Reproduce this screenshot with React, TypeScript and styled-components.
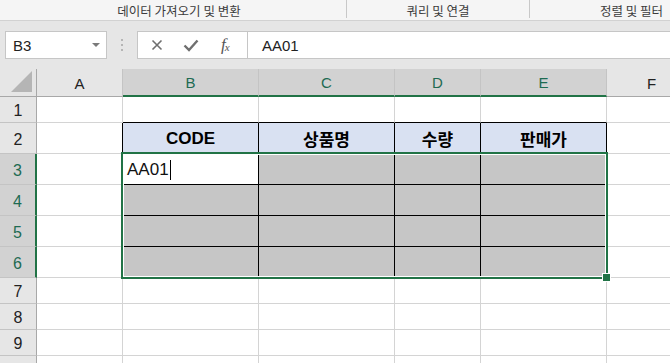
import styled, { createGlobalStyle } from 'styled-components';

const GlobalStyle = createGlobalStyle`
    html, body {
        margin: 0;
        padding: 0;
        width: 670px;
        height: 363px;
        overflow: hidden;
        background: #e6e6e6;
        font-family: "Liberation Sans", "Noto Sans CJK KR", sans-serif;
    }
`;

const Page = styled.div`
    width: 670px;
    height: 363px;
    overflow: hidden;
    display: flex;
    flex-direction: column;
`;

// 리본 그룹 이름 줄
const RibbonStrip = styled.div`
    height: 20px;
    flex: none;
    display: flex;
    background: #f5f5f5;
    border-bottom: 1px solid #d2d2d2;
`;

const RibbonGroup = styled.div<{ $width?: number; $pad?: number; $last?: boolean }>`
    ${(p) => (p.$width ? `width: ${p.$width}px;` : 'flex: 1;')}
    flex-shrink: 0;
    box-sizing: border-box;
    display: flex;
    align-items: center;
    justify-content: ${(p) => (p.$last ? 'flex-start' : 'center')};
    padding-left: ${(p) => p.$pad || 0}px;
    padding-top: 2px;
    font-family: "Noto Sans CJK KR", sans-serif;
    font-size: 12.5px;
    color: #3c3c3c;
    white-space: nowrap;
    border-right: ${(p) => (p.$last ? 'none' : '1px solid #c8c8c8')};
    margin-bottom: 2px;
`;

// 수식 입력줄
const FormulaBar = styled.div`
    height: 28px;
    flex: none;
    display: flex;
    align-items: stretch;
    padding: 10px 0 10px 5px;
`;

const NameBox = styled.div`
    width: 102px;
    box-sizing: border-box;
    background: #fff;
    border: 1px solid #c6c6c6;
    display: flex;
    align-items: center;
    justify-content: space-between;
    padding: 0 6px 0 7px;
    font-size: 15px;
    color: #222;
`;

const DropArrow = styled.span`
    width: 0;
    height: 0;
    border-left: 4px solid transparent;
    border-right: 4px solid transparent;
    border-top: 4px solid #7a7a7a;
`;

const Grip = styled.div`
    width: 30px;
    display: flex;
    flex-direction: column;
    align-items: center;
    justify-content: center;
    gap: 3px;
`;

const GripDot = styled.span`
    width: 2px;
    height: 2px;
    background: #b5b5b5;
`;

const ButtonBox = styled.div`
    width: 111px;
    box-sizing: border-box;
    background: #fff;
    border: 1px solid #c6c6c6;
    display: flex;
    align-items: center;
    padding-left: 13px;
    gap: 14px;
`;

const FxLabel = styled.span`
    font-family: "Liberation Serif", serif;
    font-style: italic;
    font-size: 17px;
    color: #555;
    margin-left: 8px;
    letter-spacing: -1px;
    sub {
        font-size: 11px;
        vertical-align: -1px;
    }
`;

const FormulaInput = styled.div`
    flex: 1;
    background: #fff;
    border: 1px solid #c6c6c6;
    border-right: none;
    margin-left: -1px;
    display: flex;
    align-items: center;
    padding-left: 14px;
    font-size: 15px;
    color: #222;
`;

// 시트
const SheetWrap = styled.div`
    position: relative;
    flex: 1;
    background: #fff;
`;

const colWidths = [37, 86, 136, 136, 86, 126, 90];
const rowHeights = [28, 26, 31, 31, 31, 31, 31, 26, 26, 26, 26];

const Grid = styled.div`
    display: grid;
    grid-template-columns: ${colWidths.map((w) => `${w}px`).join(' ')};
    grid-template-rows: ${rowHeights.map((h) => `${h}px`).join(' ')};
`;

type CellKind = 'corner' | 'colhead' | 'rowhead' | 'cell' | 'thead' | 'tbody' | 'active';

const Cell = styled.div<{ $kind: CellKind; $selected?: boolean; $right?: string; $bottom?: string }>`
    box-sizing: border-box;
    display: flex;
    align-items: center;
    justify-content: ${(p) => (p.$kind === 'active' ? 'flex-start' : 'center')};
    overflow: hidden;
    position: relative;
    border-right: 1px solid ${(p) => p.$right || '#d4d4d4'};
    border-bottom: 1px solid ${(p) => p.$bottom || '#d4d4d4'};
    background: ${(p) =>
        p.$kind === 'thead'
            ? '#d9e1f2'
            : p.$kind === 'tbody'
            ? '#c6c6c6'
            : p.$kind === 'colhead' || p.$kind === 'rowhead' || p.$kind === 'corner'
            ? p.$selected
                ? '#d2d2d2'
                : '#e6e6e6'
            : '#fff'};
    ${(p) =>
        p.$kind === 'colhead' &&
        `
        font-size: 15px;
        padding-top: 1px;
        color: ${p.$selected ? '#1e6b52' : '#222'};
        border-right-color: #c4c4c4;
        border-bottom: ${p.$selected ? '2px solid #217346' : '1px solid #a8a8a8'};
    `}
    ${(p) =>
        p.$kind === 'rowhead' &&
        `
        font-size: 16px;
        padding-top: 3px;
        color: ${p.$selected ? '#1e6b52' : '#222'};
        border-bottom-color: #c4c4c4;
        border-right: ${p.$selected ? '2px solid #217346' : '1px solid #a8a8a8'};
    `}
    ${(p) =>
        p.$kind === 'corner' &&
        `
        border-right-color: #a8a8a8;
        border-bottom-color: #a8a8a8;
    `}
    ${(p) =>
        p.$kind === 'thead' &&
        `
        font-family: "Liberation Sans", "Noto Sans CJK KR", sans-serif;
        font-weight: 700;
        font-size: 17px;
        color: #000;
        padding-top: 1px;
    `}
    ${(p) =>
        p.$kind === 'active' &&
        `
        font-size: 17px;
        color: #111;
        padding-left: 4px;
        padding-top: 2px;
    `}
`;

const Caret = styled.span`
    display: inline-block;
    width: 1px;
    height: 20px;
    background: #000;
    margin-left: 1px;
`;

const Selection = styled.div`
    position: absolute;
    box-sizing: border-box;
    border: 2px solid #217346;
    box-shadow: inset 0 0 0 1px #fff;
    pointer-events: none;
`;

const FillHandle = styled.div`
    position: absolute;
    right: -5px;
    bottom: -5px;
    width: 7px;
    height: 7px;
    background: #217346;
    border: 1px solid #fff;
`;

const columns = ['A', 'B', 'C', 'D', 'E', 'F'];
const headers = ['CODE', '상품명', '수량', '판매가'];
// 화면 아래에 잘려 보이는 10행은 숫자가 보이지 않는다
const lastVisibleRow = 9;

const sum = (arr: number[], n: number) => arr.slice(0, n).reduce((a, b) => a + b, 0);

const CornerTriangle = () => (
    <svg width="22" height="22" viewBox="0 0 22 22" style={{ position: 'absolute', right: 3, bottom: 3 }}>
        <polygon points="21,0 21,21 0,21" fill="#b5b5b5" />
    </svg>
);

const App: React.FC = () => {
    const cells: React.ReactNode[] = [];

    // 열 머리글
    cells.push(
        <Cell key="corner" $kind="corner">
            <CornerTriangle />
        </Cell>
    );
    columns.forEach((c, i) =>
        cells.push(
            <Cell key={`h-${c}`} $kind="colhead" $selected={i >= 1 && i <= 4}>
                {c}
            </Cell>
        )
    );

    for (let r = 1; r <= 10; r++) {
        cells.push(
            <Cell key={`r-${r}`} $kind="rowhead" $selected={r >= 3 && r <= 6}>
                {r <= lastVisibleRow ? r : null}
            </Cell>
        );
        columns.forEach((c, i) => {
            const inTable = r >= 2 && r <= 6 && i >= 1 && i <= 4;
            // 표 왼쪽/위쪽 선은 이웃 셀이 그린다
            const leftOfTable = i === 0 && r >= 2 && r <= 6;
            const aboveTable = r === 1 && i >= 1 && i <= 4;
            let kind: CellKind = 'cell';
            let content: React.ReactNode = null;
            if (inTable) {
                if (r === 2) {
                    kind = 'thead';
                    content = headers[i - 1];
                } else if (r === 3 && i === 1) {
                    kind = 'active';
                    content = (
                        <>
                            AA01
                            <Caret />
                        </>
                    );
                } else {
                    kind = 'tbody';
                }
            }
            cells.push(
                <Cell
                    key={`${c}${r}`}
                    $kind={kind}
                    $right={inTable || leftOfTable ? '#000' : undefined}
                    $bottom={inTable || aboveTable ? '#000' : undefined}
                >
                    {content}
                </Cell>
            );
        });
    }

    const selLeft = sum(colWidths, 2) - 2;
    const selTop = sum(rowHeights, 3) - 2;
    const selWidth = colWidths[2] + colWidths[3] + colWidths[4] + colWidths[5] + 3;
    const selHeight = rowHeights[3] + rowHeights[4] + rowHeights[5] + rowHeights[6] + 3;

    return (
        <>
            <GlobalStyle />
            <Page>
                <RibbonStrip>
                    <RibbonGroup $width={347} $pad={12}>
                        데이터 가져오기 및 변환
                    </RibbonGroup>
                    <RibbonGroup $width={183} $pad={0}>
                        쿼리 및 연결
                    </RibbonGroup>
                    <RibbonGroup $last $pad={70}>
                        정렬 및 필터
                    </RibbonGroup>
                </RibbonStrip>
                <FormulaBar>
                    <NameBox>
                        B3
                        <DropArrow />
                    </NameBox>
                    <Grip>
                        <GripDot />
                        <GripDot />
                        <GripDot />
                    </Grip>
                    <ButtonBox>
                        <svg width="12" height="12" viewBox="0 0 12 12">
                            <path d="M1.5 1.5 L10.5 10.5 M10.5 1.5 L1.5 10.5" stroke="#6f6f6f" strokeWidth="1.6" />
                        </svg>
                        <svg width="16" height="13" viewBox="0 0 16 13" style={{ marginLeft: 6 }}>
                            <path d="M1.5 6.5 L6 11 L14.5 1.5" stroke="#6f6f6f" strokeWidth="2.4" fill="none" />
                        </svg>
                        <FxLabel>
                            f<sub>x</sub>
                        </FxLabel>
                    </ButtonBox>
                    <FormulaInput>AA01</FormulaInput>
                </FormulaBar>
                <SheetWrap>
                    <Grid>{cells}</Grid>
                    <Selection style={{ left: selLeft, top: selTop, width: selWidth, height: selHeight }}>
                        <FillHandle />
                    </Selection>
                </SheetWrap>
            </Page>
        </>
    );
};

export default App;
